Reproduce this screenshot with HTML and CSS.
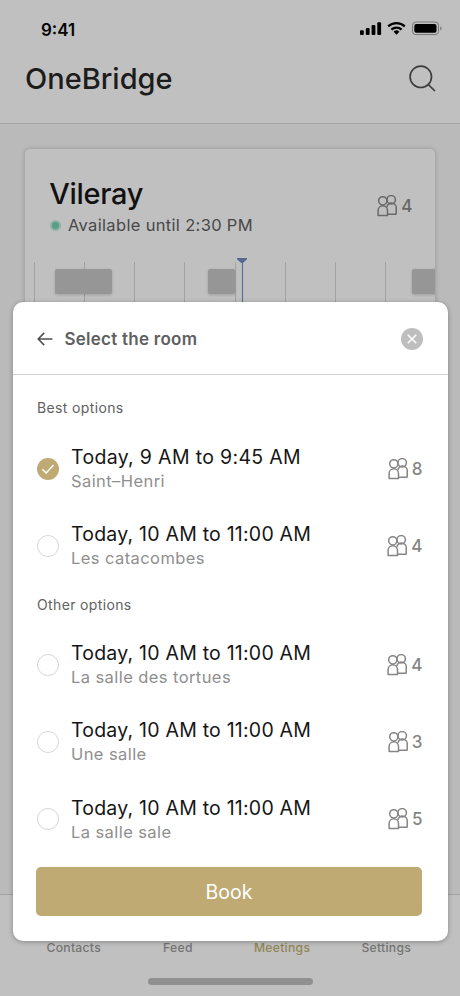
FILE: index.html
```html
<!DOCTYPE html>
<html lang="en">
<head>
<meta charset="utf-8">
<title>OneBridge</title>
<link rel="stylesheet" href="styles.css">
</head>
<body>
<svg class="defs" aria-hidden="true">
  <symbol id="people" viewBox="0 0 20 22">
    <g fill="none" stroke="currentColor" stroke-width="1.5" stroke-linejoin="round">
      <circle cx="5.8" cy="5.8" r="4.1"/>
      <path d="M1.1 20.4v-4.9a4.7 4.7 0 0 1 9.4 0v4.9z"/>
      <circle cx="14.2" cy="4.8" r="4.2"/>
      <path d="M9.9 12a4.7 4.7 0 0 1 9.3 1.7v5.1a.5.5 0 0 1-.5.5h-8.2"/>
    </g>
  </symbol>
</svg>
<div class="app">
  <header class="top">
    <div class="status">
      <span class="time">9:41</span>
      <svg class="status-icons" width="82" height="16" viewBox="0 0 82 16">
        <rect x="0" y="9.2" width="3.8" height="4.8" rx="1"/>
        <rect x="5.8" y="7" width="3.8" height="7" rx="1"/>
        <rect x="11.6" y="4" width="3.8" height="10" rx="1"/>
        <rect x="17.3" y="1.2" width="3.8" height="12.8" rx="1"/>
        <g fill="none" stroke="#000" stroke-width="2.3">
          <path d="M28.2 5.4a12 12 0 0 1 16.6 0"/>
          <path d="M31.4 8.6a7.4 7.4 0 0 1 10.2 0"/>
        </g>
        <path d="M33.6 10.7a4.2 4.2 0 0 1 5.8 0l-2.9 3z"/>
        <rect x="52.5" y="1" width="26" height="12.6" rx="3.4" fill="none" stroke="#777" stroke-width="1"/>
        <rect x="54.3" y="2.9" width="22.2" height="8.9" rx="2"/>
        <path d="M80 5.2q1.7.4 1.7 2.1t-1.7 2.1z" fill="#888"/>
      </svg>
    </div>
    <div class="brand">
      <h1>OneBridge</h1>
      <svg class="search" width="28" height="28" viewBox="0 0 28 28"><g fill="none" stroke="#3d3d3d" stroke-width="1.7"><circle cx="12.8" cy="11.8" r="10.7"/><path d="M20.1 19.4l6.8 6.6"/></g></svg>
    </div>
  </header>
  <main class="main">
    <article class="card">
      <div class="card-head">
        <div>
          <h2>Vileray</h2>
          <p class="avail"><span class="dot"></span><span>Available until 2:30 PM</span></p>
        </div>
        <div class="cap"><svg class="people"><use href="#people"/></svg><span>4</span></div>
      </div>
      <div class="timeline">
        <i class="tick"></i><i class="tick"></i><i class="tick"></i><i class="tick"></i><i class="tick"></i><i class="tick"></i><i class="tick"></i><i class="tick"></i>
        <span class="busy first"></span><span class="busy second"></span><span class="busy third"></span>
        <svg class="now" width="12" height="50" viewBox="0 0 12 50"><path d="M1 0h10v1.2L6.8 5h-1.6L1 1.2z" fill="#55688f"/><path d="M6.5 4v46" stroke="#60709b" stroke-width="1.2"/></svg>
      </div>
    </article>
  </main>
  <nav class="tabs">
    <span>Contacts</span><span>Feed</span><span class="active">Meetings</span><span>Settings</span>
  </nav>
  <div class="home"></div>

  <section class="sheet">
    <div class="sheet-head">
      <svg class="back" width="16" height="14" viewBox="0 0 16 14"><path d="M7.2.9L1.2 7l6 6.1M1.2 7h14.2" fill="none" stroke="#4d4d4d" stroke-width="1.5"/></svg>
      <h3>Select the room</h3>
      <svg class="close" width="22" height="22" viewBox="0 0 22 22"><circle cx="11" cy="11" r="11" fill="#bebebe"/><path d="M6.7 6.7l8.6 8.6M15.3 6.7l-8.6 8.6" stroke="#fff" stroke-width="1.5"/></svg>
    </div>
    <div class="options">
      <h4>Best options</h4>
      <div class="row">
        <span class="radio on"><svg width="22" height="22" viewBox="0 0 22 22"><path d="M5.5 11.4l3.7 3.6 7.3-8" fill="none" stroke="#fff" stroke-width="1.5"/></svg></span>
        <div class="slot"><p class="when first-when">Today, 9 AM to 9:45 AM</p><p class="room">Saint–Henri</p></div>
        <div class="cap"><svg class="people"><use href="#people"/></svg><span>8</span></div>
      </div>
      <div class="row">
        <span class="radio"></span>
        <div class="slot"><p class="when">Today, 10 AM to 11:00 AM</p><p class="room">Les catacombes</p></div>
        <div class="cap"><svg class="people"><use href="#people"/></svg><span>4</span></div>
      </div>
      <h4 class="other">Other options</h4>
      <div class="row">
        <span class="radio"></span>
        <div class="slot"><p class="when">Today, 10 AM to 11:00 AM</p><p class="room">La salle des tortues</p></div>
        <div class="cap"><svg class="people"><use href="#people"/></svg><span>4</span></div>
      </div>
      <div class="row">
        <span class="radio"></span>
        <div class="slot"><p class="when">Today, 10 AM to 11:00 AM</p><p class="room">Une salle</p></div>
        <div class="cap"><svg class="people"><use href="#people"/></svg><span>3</span></div>
      </div>
      <div class="row">
        <span class="radio"></span>
        <div class="slot"><p class="when">Today, 10 AM to 11:00 AM</p><p class="room">La salle sale</p></div>
        <div class="cap"><svg class="people"><use href="#people"/></svg><span>5</span></div>
      </div>
    </div>
    <button class="book">Book</button>
  </section>
</div>
</body>
</html>
```
FILE: styles.css
```css
* { box-sizing: border-box; margin: 0; padding: 0; }
body { font-family: Inter, "Liberation Sans", sans-serif; background: #bababa; }
svg { display: block; flex: none; }
.defs { position: absolute; width: 0; height: 0; }
.app { position: relative; width: 460px; height: 996px; overflow: hidden; display: flex; flex-direction: column; }

.top { height: 124px; background: #c0c0c0; border-bottom: 1px solid #a3a3a3; }
.status { display: flex; justify-content: space-between; align-items: center; height: 43px; padding: 17px 18px 0 41px; }
.status-icons { margin-top: -2px; }
.time { font-size: 17px; line-height: 20px; font-weight: 600; color: #050505; }
.brand { display: flex; justify-content: space-between; align-items: center; padding: 17px 24px 0 25px; }
.brand h1 { font-size: 29px; line-height: 38px; font-weight: 500; color: #1c1c1c; }

.main { flex: 1; padding: 25px 25px 0; }
.card { height: 300px; background: #c0c0c0; border-radius: 5px; box-shadow: 0 0 5px rgba(0, 0, 0, .22); }
.card-head { display: flex; justify-content: space-between; padding: 27px 22.5px 0 25px; height: 113px; }
.card h2 { font-size: 29px; line-height: 36px; font-weight: 500; letter-spacing: -.3px; margin-left: -.7px; color: #111; }
.avail { display: flex; align-items: center; gap: 7px; font-size: 16.5px; line-height: 26px; letter-spacing: .33px; color: #484848; }
.dot { width: 11px; height: 11px; border-radius: 50%; background: #589e87; border: 2.5px solid #8eb3a6; }
.cap { display: flex; align-items: center; gap: 4px; font-size: 17px; font-weight: 500; color: #858585; }
.people { width: 20px; height: 22px; }
.card-head .cap { height: 22px; margin-top: 19px; color: #686868; }
.timeline { position: relative; display: flex; overflow: hidden; height: 60px; margin-top: -4px; padding: 4px 0 0 8.5px; }
.tick { flex: 0 0 50.25px; border-left: 1px solid #a2a2a2; }
.busy { position: absolute; top: 11px; height: 25px; background: #969696; border-radius: 2px; box-shadow: 0 1px 3px rgba(0, 0, 0, .18); }
.first { left: 30px; width: 57px; }
.second { left: 183px; width: 27px; }
.third { left: 387px; width: 30px; }
.now { position: absolute; left: 211px; top: 0; }

.tabs { height: 102px; border-top: 1px solid #a0a0a0; background: #c0c0c0; display: grid; grid-template-columns: repeat(4, 104.2px); justify-content: center; padding-top: 44px; text-align: center; font-size: 12.2px; line-height: 17px; font-weight: 500; letter-spacing: .27px; color: #747474; }
.tabs .active { color: #918655; }
.home { position: absolute; left: 148px; top: 978px; width: 165px; height: 7px; border-radius: 4px; background: #909090; }

.sheet { position: absolute; left: 12.5px; top: 302px; width: 435px; height: 638.5px; border-radius: 10px; background: #fff; box-shadow: 0 1px 5px rgba(0, 0, 0, .3); }
.sheet-head { display: flex; align-items: center; height: 73px; border-bottom: 1px solid #d0d0d0; padding: 2px 24.5px 0 24px; }
.sheet-head h3 { flex: 1; margin-left: 12px; font-size: 17px; line-height: 22px; font-weight: 600; letter-spacing: .25px; color: #606060; }
.options { padding: 24px 25px 0 24.5px; }
h4 { font-size: 14px; line-height: 18px; font-weight: 400; color: #616161; letter-spacing: .36px; margin-bottom: 13px; }
.other { margin: 11px 0 12.5px; }
.row { display: flex; align-items: center; height: 77.25px; }
.radio { width: 22px; height: 22px; border: 1px solid #d6d6d6; border-radius: 50%; }
.radio.on { border: 0; background: #beaa72; }
.slot { flex: 1; margin-left: 12px; }
.when { font-size: 19.5px; line-height: 26px; color: #161616; font-weight: 400; letter-spacing: .22px; }
.first-when { letter-spacing: .33px; }
.room { font-size: 16.5px; line-height: 23px; letter-spacing: .42px; color: #8f8f8f; }
.book { display: block; width: 386px; height: 49px; margin: 9px 0 0 23.5px; border: 0; border-radius: 5px; background: #bfaa74; color: #fff; font: 400 19.5px/51px Inter, sans-serif; }
```
